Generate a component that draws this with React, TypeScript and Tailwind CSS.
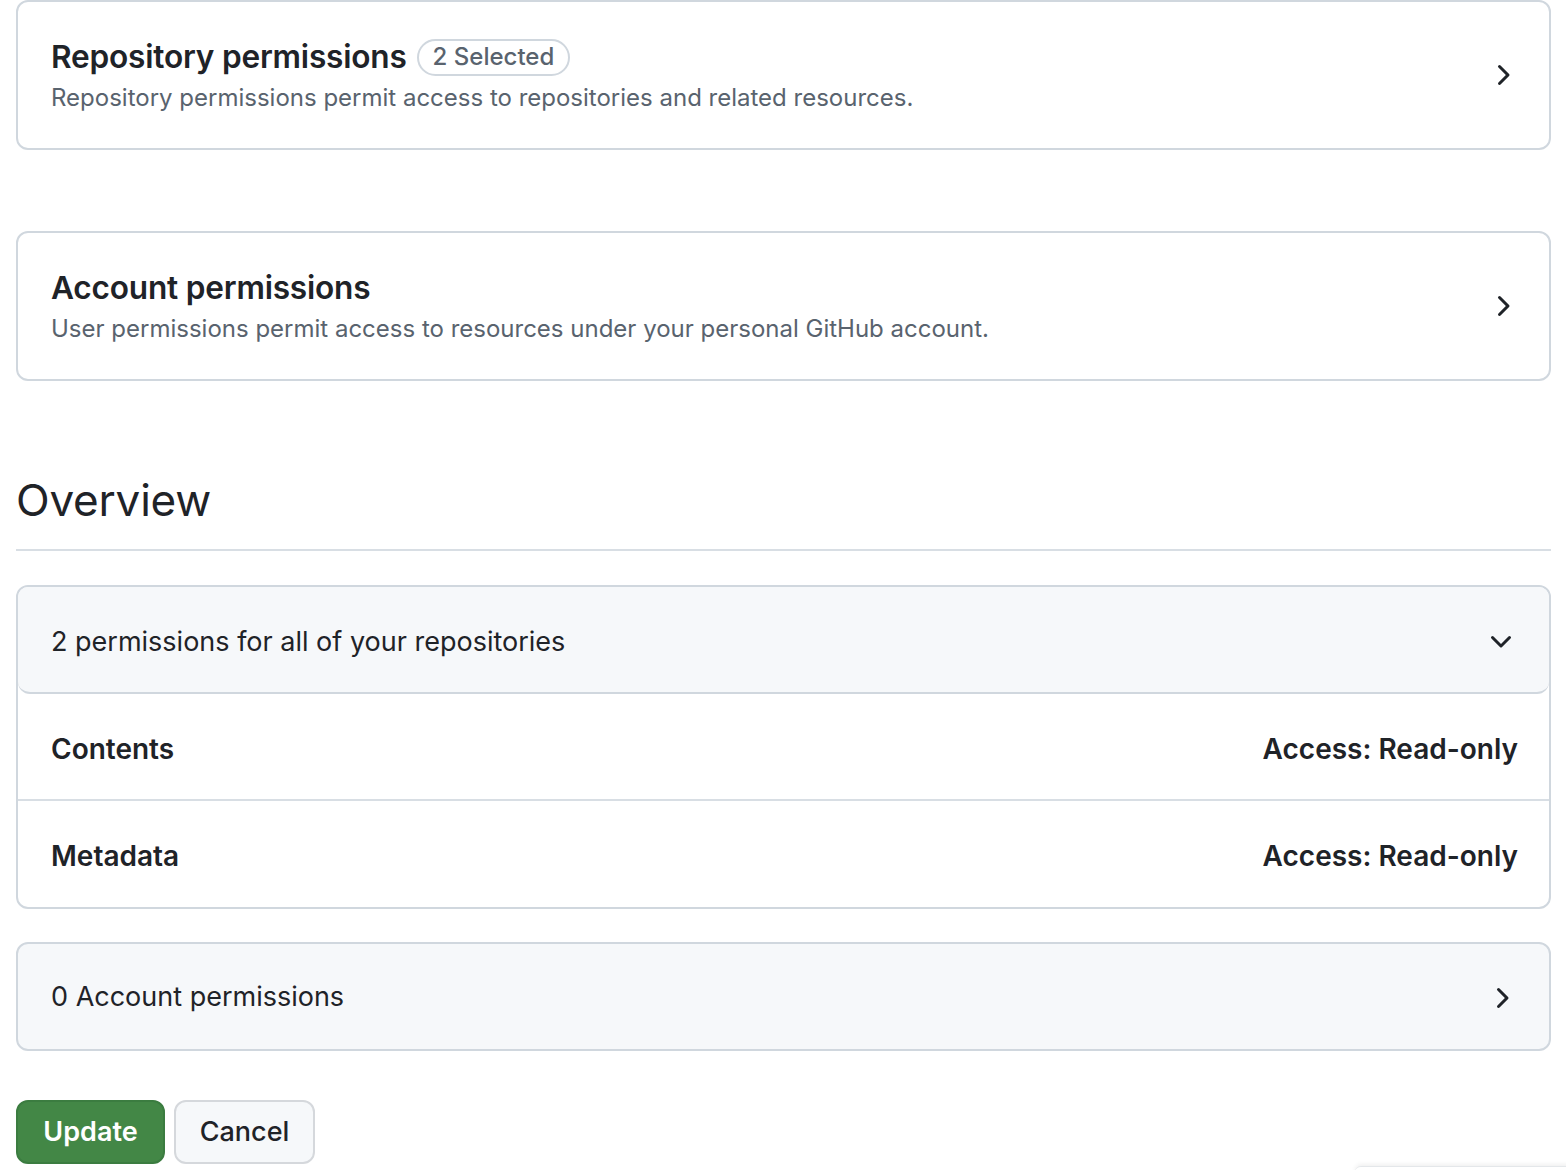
import React from 'react';

const font = { fontFamily: 'Inter, "Noto Sans", sans-serif' };

const ChevronRight = ({ className = '' }: { className?: string }) => (
  <svg viewBox="0 0 16 16" width="32" height="32" className={className} fill="currentColor">
    <path d="M6.22 3.22a.75.75 0 0 1 1.06 0l4.25 4.25a.75.75 0 0 1 0 1.06l-4.25 4.25a.751.751 0 0 1-1.042-.018.751.751 0 0 1-.018-1.042L9.94 8 6.22 4.28a.75.75 0 0 1 0-1.06Z" />
  </svg>
);

const ChevronDown = ({ className = '' }: { className?: string }) => (
  <svg viewBox="0 0 16 16" width="32" height="32" className={className} fill="currentColor">
    <path d="M12.78 5.22a.749.749 0 0 1 0 1.06l-4.25 4.25a.749.749 0 0 1-1.06 0L3.22 6.28a.749.749 0 1 1 1.06-1.06L8 8.94l3.72-3.72a.749.749 0 0 1 1.06 0Z" />
  </svg>
);

interface PermissionCardProps {
  title: string;
  description: string;
  badge?: string;
}

const PermissionCard: React.FC<PermissionCardProps> = ({ title, description, badge }) => (
  <div className="flex h-[150px] items-center justify-between rounded-xl border-2 border-[#d0d7de] bg-white pl-[33px] pr-[31px]">
    <div className="flex flex-col pt-[4px]">
      <div className="flex items-center gap-[10px] leading-[42px]">
        <h3 className="text-[31.6px] font-semibold tracking-[-0.2px] text-[#1f2328]">{title}</h3>
        {badge && (
          <span className="flex h-[37px] items-center rounded-full border-2 border-[#d0d7de] px-[14px] text-[24px] font-medium text-[#59636e]">
            {badge}
          </span>
        )}
      </div>
      <p className="text-[24px] leading-[40px] text-[#59636e]">{description}</p>
    </div>
    <ChevronRight className="text-[#1f2328]" />
  </div>
);

const AccessRow = ({ name, last }: { name: string; last?: boolean }) => (
  <div
    className={`flex items-center justify-between pl-[33px] pr-[31px] ${
      last ? 'h-[106px] pt-[4px]' : 'h-[107px] border-b-2 border-[#d8dee4] pt-[5px]'
    }`}
  >
    <span className="text-[28px] font-semibold text-[#1f2328]">{name}</span>
    <span className="text-[28px] font-semibold text-[#1f2328]">Access: Read-only</span>
  </div>
);

export default function App() {
  return (
    <div style={font} className="relative min-h-[1170px] overflow-hidden bg-white pl-4 pr-[15px] text-[#1f2328]">
      <PermissionCard
        title="Repository permissions"
        badge="2 Selected"
        description="Repository permissions permit access to repositories and related resources."
      />
      <div className="mt-[81px]">
        <PermissionCard
          title="Account permissions"
          description="User permissions permit access to resources under your personal GitHub account."
        />
      </div>

      <h2 className="mt-[80px] border-b-2 border-[#d8dee4] pb-[10px] text-[44px] font-normal leading-[78px] tracking-[-0.2px]">
        Overview
      </h2>

      <div className="mt-[34px] overflow-hidden rounded-xl border-2 border-[#d0d7de]">
        <div className="flex h-[107px] items-center justify-between rounded-b-xl border-b-2 border-[#d0d7de] bg-[#f6f8fa] pl-[33px] pr-[32px] pt-[5px]">
          <span className="text-[27px]">2 permissions for all of your repositories</span>
          <ChevronDown className="text-[#1f2328]" />
        </div>
        <AccessRow name="Contents" />
        <AccessRow name="Metadata" last />
      </div>

      <div className="mt-[33px] flex h-[109px] items-center justify-between rounded-xl border-2 border-[#d0d7de] bg-[#f6f8fa] pl-[33px] pr-[32px] pt-[2px]">
        <span className="text-[27px]">0 Account permissions</span>
        <ChevronRight className="text-[#1f2328]" />
      </div>

      <div className="mt-[49px] flex gap-[9px]">
        <button className="h-[64px] w-[149px] rounded-xl border-2 border-[#3b7c40] bg-[#438746] text-[27px] font-semibold text-white">
          Update
        </button>
        <button className="h-[64px] w-[141px] rounded-xl border-2 border-[#d5d8dc] bg-[#f6f8fa] text-[27px] font-medium text-[#1f2328]">
          Cancel
        </button>
      </div>

      <div className="absolute left-[1355px] top-[1166px] h-[20px] w-[240px] rounded-tl-md border-t border-[#e4e7ea] bg-white shadow-[0_-2px_4px_rgba(0,0,0,0.06)]" />
    </div>
  );
}
